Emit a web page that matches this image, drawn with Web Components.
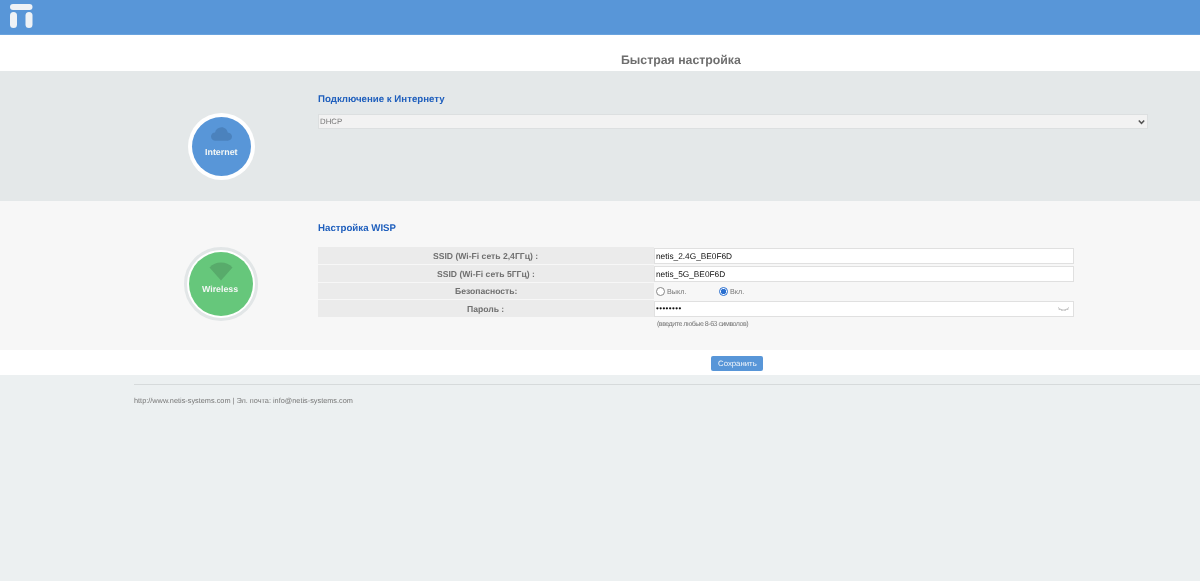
<!DOCTYPE html>
<html><head><meta charset="utf-8">
<style>
html,body{margin:0;padding:0;background:#ecf0f1;height:581px;overflow:hidden;font-family:"Liberation Sans",Arial,sans-serif;text-rendering:geometricPrecision}
</style></head><body>
<nt-header></nt-header>
<nt-title>Быстрая настройка</nt-title>
<nt-section bg="#e4e8e9" h="130" pt="22" shift="10">
  <nt-badge slot="icon" kind="internet"></nt-badge>
  <nt-heading style="margin-bottom:7px">Подключение к Интернету</nt-heading>
  <nt-select></nt-select>
</nt-section>
<nt-section bg="#f7f7f7" h="149" pt="21" shift="8">
  <nt-badge slot="icon" kind="wireless"></nt-badge>
  <nt-heading>Настройка WISP</nt-heading>
  <nt-form></nt-form>
</nt-section>
<nt-actions></nt-actions>
<nt-footer></nt-footer>
<script>
function def(name,html){
  customElements.define(name,class extends HTMLElement{
    connectedCallback(){
      if(this.shadowRoot)return;
      const r=this.attachShadow({mode:'open'});
      r.innerHTML=typeof html==='function'?html(this):html;
    }
  });
}
def('nt-header',`<style>:host{display:flex;align-items:flex-start;box-sizing:border-box;height:35px;background:#5896d8;border-bottom:1px solid #6aa3de;padding:4px 0 0 10px}svg{display:block}</style>
<svg width="23" height="24" viewBox="0 0 23 24"><rect x="0" y="0" width="22.500" height="6" rx="3" fill="#eef2f6"/><rect x="0" y="8" width="7" height="16" rx="3.500" fill="#eef2f6"/><rect x="15.500" y="8" width="7" height="16" rx="3.500" fill="#eef2f6"/></svg>`);
def('nt-title',`<style>:host{display:block;box-sizing:border-box;height:36px;background:#fff;padding:17px 0 0 161px;text-align:center;font-size:12.300px;line-height:16px;font-weight:bold;color:#6e6e6e}
span{display:inline-block;will-change:transform}</style><span><slot></slot></span>`);
def('nt-section',h=>`<style>:host{display:grid;grid-template-columns:318px 1fr;box-sizing:border-box;height:${h.getAttribute('h')}px;background:${h.getAttribute('bg')}}
.l{display:flex;align-items:center;justify-content:center;padding-left:125px;padding-top:${2*h.getAttribute('shift')}px;box-sizing:border-box;width:318px}
.r{padding-top:${h.getAttribute('pt')}px}</style>
<div class="l"><slot name="icon"></slot></div><div class="r"><slot></slot></div>`);
def('nt-badge',h=>{
 const w=h.getAttribute('kind')==='wireless';
 return `<style>:host{display:block;${w?'margin-right:2px':'margin-right:1px'}}
.o{box-sizing:border-box;display:flex;border-radius:50%;${w?'width:74px;height:74px;border:3px solid #e2e6e7;background:#fff;padding:2px':'width:67px;height:67px;background:#fff;padding:4px'}}
.i{flex:1;border-radius:50%;background:${w?'#66c77b':'#5896d8'};display:flex;flex-direction:column;align-items:center;color:#f4f7f5;font-weight:bold;${w?'font-size:8.800px;padding-top:10px':'font-size:8.900px;padding-top:10px'};box-sizing:border-box}
svg{display:block;margin-bottom:${w?3:6}px}
b{will-change:transform}</style>
<div class="o"><div class="i">${w?
`<svg width="24" height="19" viewBox="0 0 24 19"><path d="M0.500 5.500C3.500 2 7.500 0.500 12 0.500S20.500 2 23.500 5.500L12 18.500Z" fill="#58ab6b"/></svg><b>Wireless</b>`:
`<svg width="21" height="14" viewBox="0 0 22 14"><path d="M5 14C2 14 0 12 0 9.500C0 7 2 5.300 4.200 5.300C5 2.300 7.500 0 11 0C14.500 0 17 2.500 17.500 5.300C20 5.500 22 7.200 22 9.700C22 12.200 20 14 17.500 14Z" fill="#4b82bd"/></svg><b>Internet</b>`}</div></div>`});
def('nt-heading',`<style>:host{display:block;font-size:9.700px;line-height:14px;font-weight:bold;color:#1f5fbd;margin-bottom:8px}
div{will-change:transform}</style><div><slot></slot></div>`);
def('nt-select',`<style>:host{display:block;width:830px}
.s{box-sizing:border-box;height:15px;border:1px solid #dcdfe0;background:#f2f2f2;display:flex;align-items:center;justify-content:space-between;padding:0 2px 0 1px;font-size:7.800px;color:#777}
span{will-change:transform}
svg{display:block}</style><div class="s"><span>DHCP</span><svg width="7" height="6" viewBox="0 0 7 6"><path d="M.8 1.500L3.500 4.300L6.200 1.500" fill="none" stroke="#555" stroke-width="1.500"/></svg></div>`);
def('nt-form',`<style>:host{display:block;width:756px;margin-top:11px;color:#6e6e6e}
.g{display:grid;grid-template-columns:336px 420px;grid-template-rows:17px 17px 16px 17px;row-gap:1px}
.k{background:#ebebeb;display:flex;align-items:center;justify-content:center;font-weight:bold;font-size:8.600px;color:#707070}
.v{display:flex;align-items:center}
.f{box-sizing:border-box;width:420px;height:16px;border:1px solid #e0e0e0;background:#fff;display:flex;align-items:center;justify-content:space-between;padding:0 3px 0 1px;font-size:8.300px;color:#111}
.rb{display:flex;align-items:center;gap:2px;font-size:7.200px;color:#777;padding-left:2px;width:61px}
.c{box-sizing:border-box;width:9px;height:9px;border-radius:50%;border:1px solid #888;background:#fff;display:block}
.c.on{border:1px solid #2a6fd0;background:radial-gradient(circle,#2a6fd0 0 2.500px,#fff 3px)}
.h{font-size:7.100px;letter-spacing:-.5px;color:#777;padding:3px 0 0 339px;line-height:9px}
span{will-change:transform}
svg{display:block}</style>
<div class="g">
<div class="k"><span>SSID (Wi-Fi сеть 2,4ГГц) :</span></div><div class="v"><div class="f"><span>netis_2.4G_BE0F6D</span></div></div>
<div class="k"><span>SSID (Wi-Fi сеть 5ГГц) :</span></div><div class="v"><div class="f"><span>netis_5G_BE0F6D</span></div></div>
<div class="k"><span>Безопасность:</span></div><div class="v"><label class="rb"><i class="c"></i><span>Выкл.</span></label><label class="rb"><i class="c on"></i><span>Вкл.</span></label></div>
<div class="k"><span>Пароль :</span></div><div class="v"><div class="f"><span style="letter-spacing:.4px;font-size:8px">••••••••</span><svg width="13" height="6" viewBox="0 0 13 6"><path d="M1 1.500C3 3.500 5 4 6.500 4C8 4 10 3.500 12 1.500M2.500 3L2 4M5 4L4.800 5M8 4L8.200 5M10.500 3L11 4" fill="none" stroke="#aaa" stroke-width=".8"/></svg></div></div>
</div>
<div class="h"><span style="display:inline-block">(введите любые 8-63 символов)</span></div>`);
def('nt-actions',`<style>:host{display:flex;justify-content:center;box-sizing:border-box;height:25px;background:#fff;padding:6px 0 0 274px}
.b{box-sizing:border-box;width:52px;height:15px;border-radius:2px;background:#5896d8;color:#f2f6fb;font-size:7.800px;display:flex;align-items:center;justify-content:center}
span{will-change:transform}</style><div class="b"><span>Сохранить</span></div>`);
def('nt-footer',`<style>:host{display:block;padding:9px 0 0 134px;color:#777;font-size:7.330px}
.t{border-top:1px solid #d6dadb;padding-top:11px;line-height:9px}
span{display:inline-block;will-change:transform}</style><div class="t"><span>http://www.netis-systems.com | Эл. почта: info@netis-systems.com</span></div>`);
</script>
</body></html>
